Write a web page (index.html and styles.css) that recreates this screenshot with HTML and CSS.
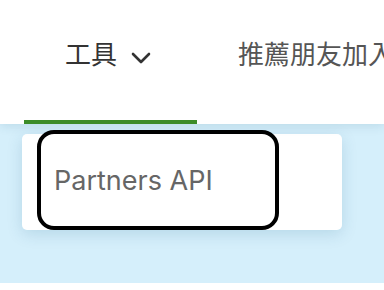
FILE: index.html
```html
<!DOCTYPE html>
<html lang="zh-Hant">

<head>
    <meta charset="UTF-8">
    <meta name="viewport" content="width=device-width, initial-scale=1.0">
    <title>menu</title>
    <link rel="stylesheet" href="styles.css">
</head>

<body>
    <div class="topbar">
        <div class="tab active">
            <span>工具</span>
            <svg class="chev" width="20" height="12" viewBox="0 0 20 12">
                <polyline points="2,2 10,10 18,2" fill="none" stroke="#333" stroke-width="2.6" stroke-linecap="round" stroke-linejoin="round" />
            </svg>
        </div>
        <div class="tab">
            <span>推薦朋友加入</span>
        </div>
    </div>
    <div class="area">
        <div class="drop">
            <a class="item" href="#">Partners API</a>
        </div>
    </div>
    <div class="foot"></div>
</body>

</html>
```

FILE: styles.css
```css
*{
    margin: 0;
    padding: 0;
    box-sizing: border-box;
}
body{
    width: 384px;
    height: 290px;
    overflow: hidden;
    background-color: #fff;
    font-family: "Noto Sans CJK TC", "Noto Sans", sans-serif;
}
.topbar{
    height: 124px;
    display: flex;
    padding-left: 24px;
    background-color: #fff;
    position: relative;
    z-index: 2;
    box-shadow: 0 2px 10px rgba(0, 70, 100, 0.12);
    white-space: nowrap;
}
.tab{
    display: flex;
    align-items: flex-start;
    flex-shrink: 0;
    padding: 40px 41px 0 41px;
    font-size: 26px;
    line-height: 26px;
    color: #555;
    border-bottom: 4px solid transparent;
}
.tab.active{
    color: #333;
    border-bottom-color: #3c8c28;
}
.chev{
    margin: 12px 5px 0 14px;
}
.area{
    height: 159px;
    background-color: #d5effb;
    padding: 10px 0 0 22px;
}
.drop{
    width: 320px;
    height: 96px;
    background-color: #fff;
    border-radius: 5px;
    box-shadow: 0 4px 16px rgba(0, 80, 120, 0.15);
    padding-left: 19px;
}
.item{
    display: flex;
    align-items: center;
    width: 234px;
    height: 92px;
    padding-left: 13px;
    font-family: Inter, "Noto Sans", sans-serif;
    font-size: 27px;
    color: #666;
    text-decoration: none;
    border-radius: 13px;
    outline: 4px solid #000;
}
.foot{
    height: 7px;
    background-color: #fff;
}
```
